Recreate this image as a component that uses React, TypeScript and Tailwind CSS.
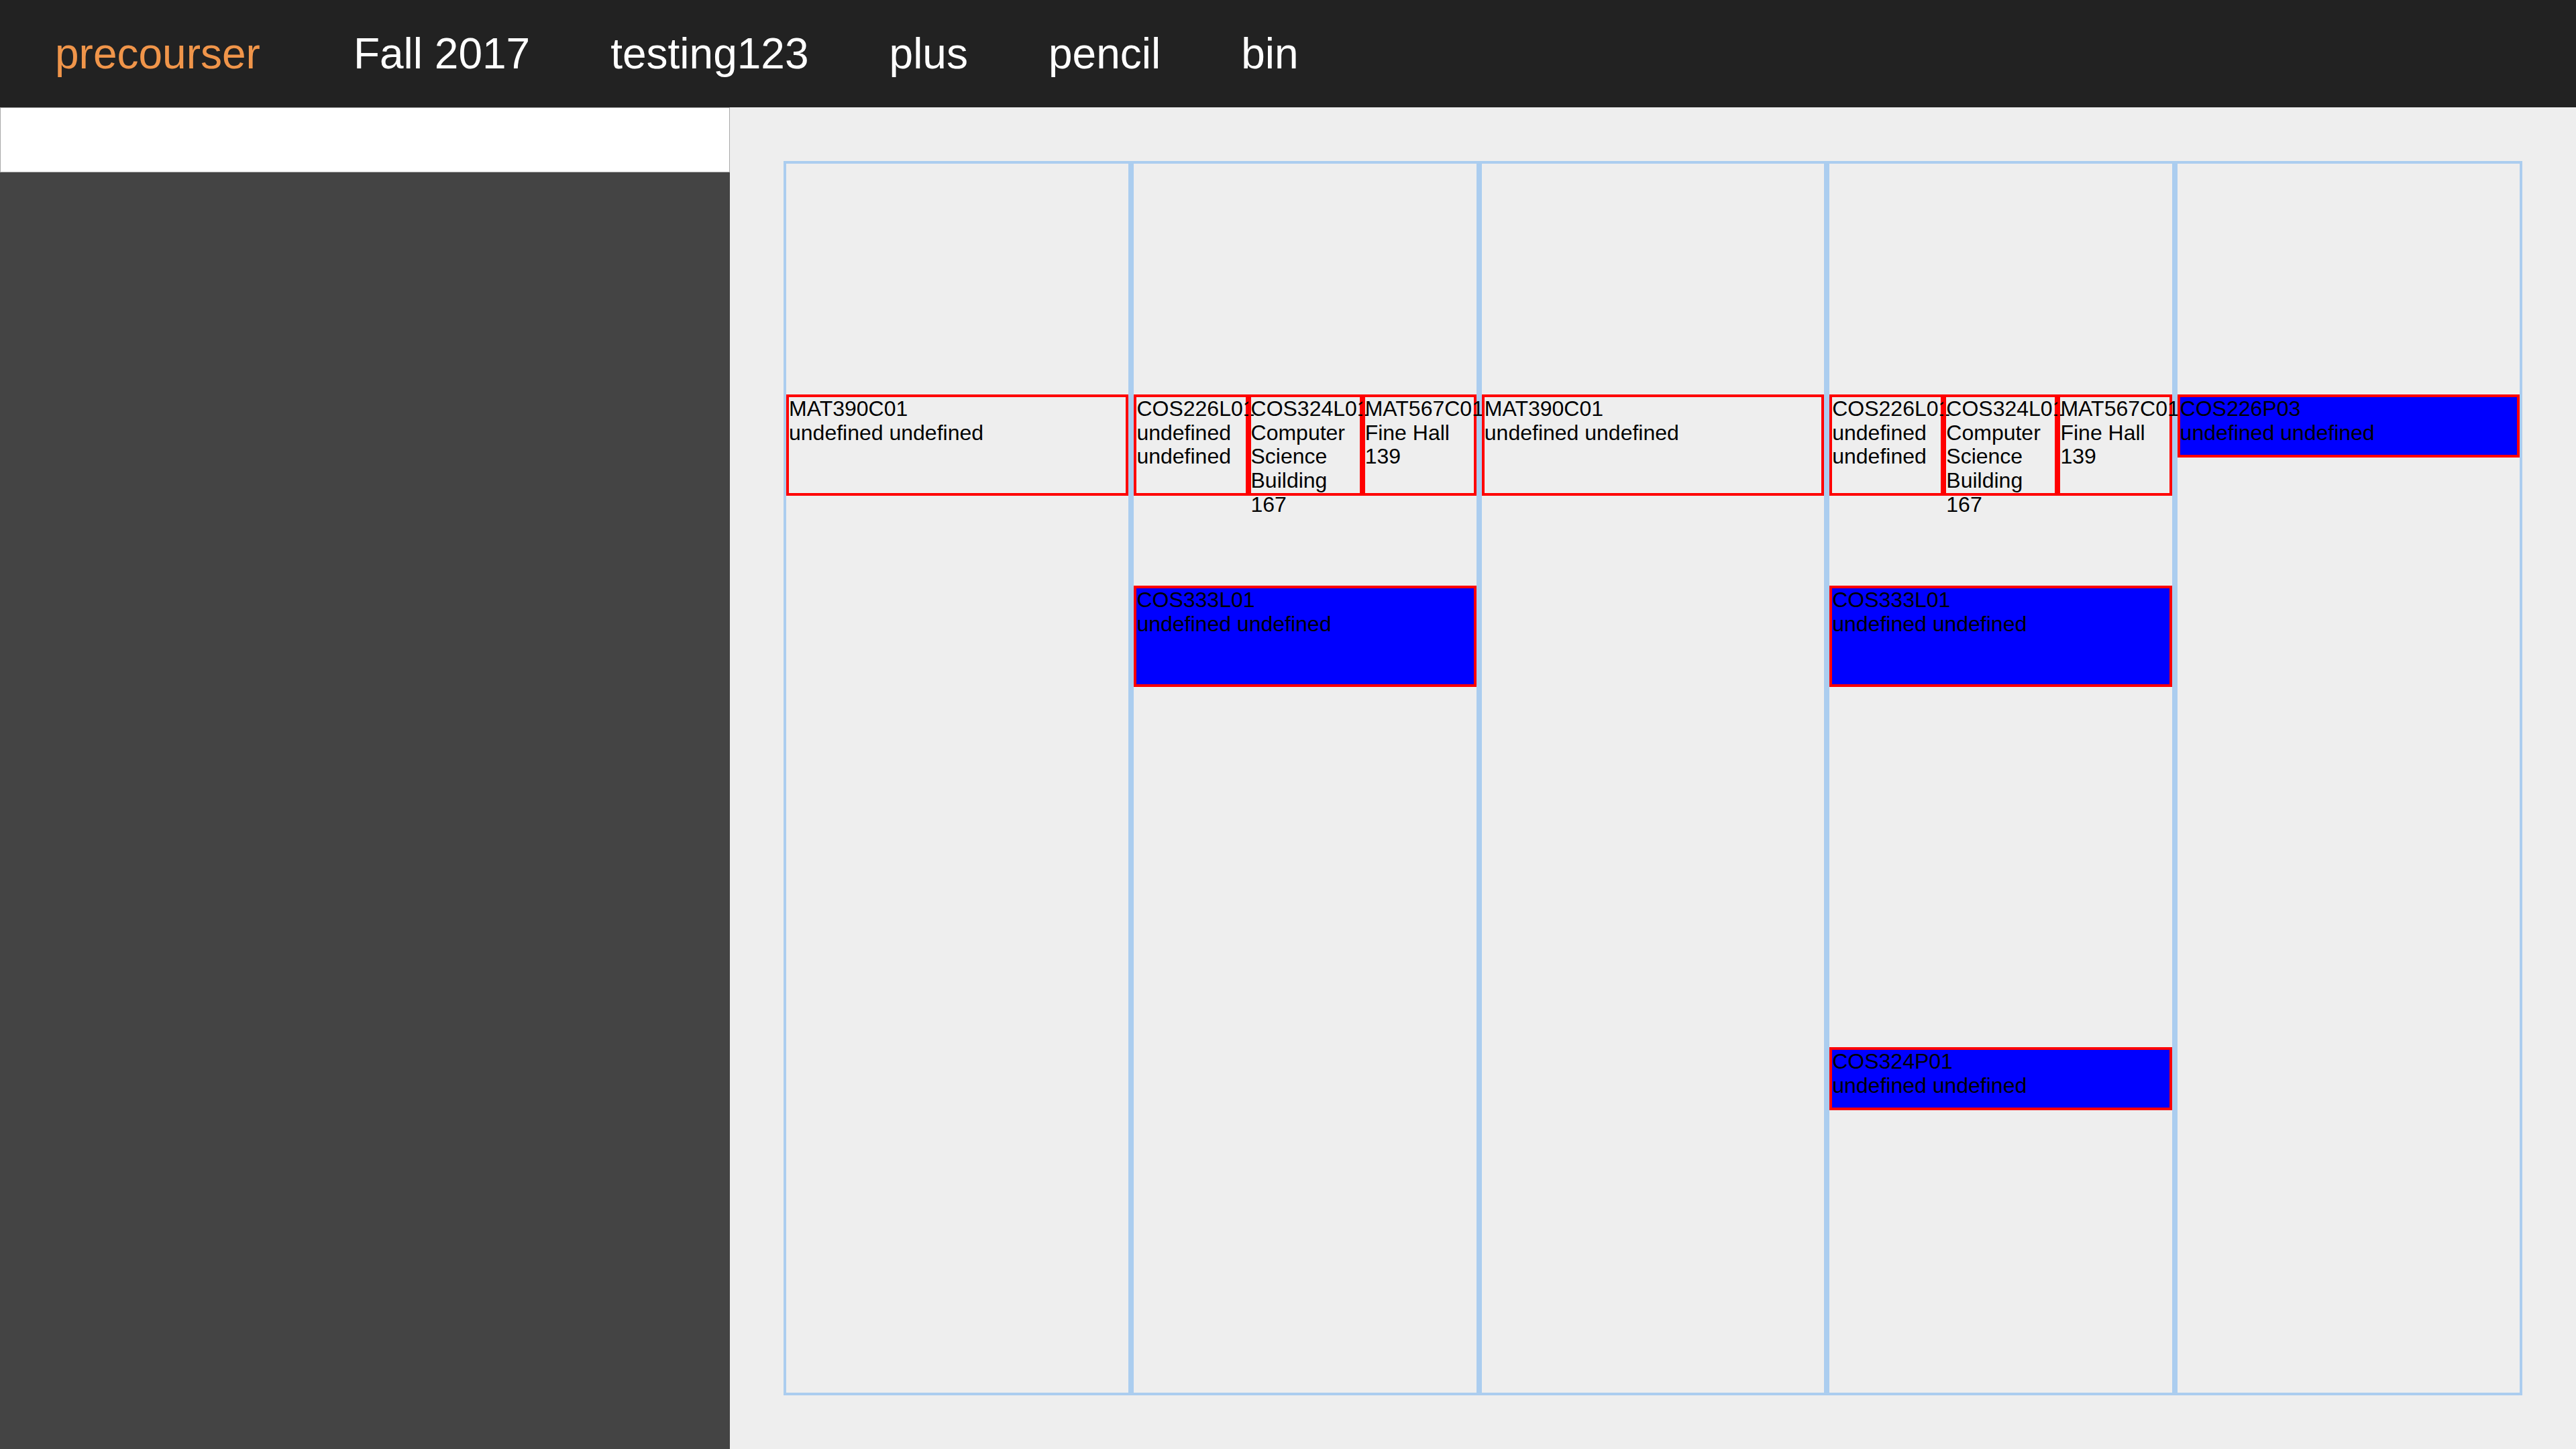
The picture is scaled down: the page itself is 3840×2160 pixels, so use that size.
import React from 'react';

type CalEvent = {
  col: number;
  top: number;
  height: number;
  slot: number;
  slots: number;
  filled?: boolean;
  lines: string[];
};

const events: CalEvent[] = [
  { col: 0, top: 344, height: 151, slot: 0, slots: 1, lines: ['MAT390C01', 'undefined undefined'] },
  { col: 1, top: 344, height: 151, slot: 0, slots: 3, lines: ['COS226L01', 'undefined undefined'] },
  { col: 1, top: 344, height: 151, slot: 1, slots: 3, lines: ['COS324L01', 'Computer Science Building 167'] },
  { col: 1, top: 344, height: 151, slot: 2, slots: 3, lines: ['MAT567C01', 'Fine Hall 139'] },
  { col: 1, top: 629, height: 151, slot: 0, slots: 1, filled: true, lines: ['COS333L01', 'undefined undefined'] },
  { col: 2, top: 344, height: 151, slot: 0, slots: 1, lines: ['MAT390C01', 'undefined undefined'] },
  { col: 3, top: 344, height: 151, slot: 0, slots: 3, lines: ['COS226L01', 'undefined undefined'] },
  { col: 3, top: 344, height: 151, slot: 1, slots: 3, lines: ['COS324L01', 'Computer Science Building 167'] },
  { col: 3, top: 344, height: 151, slot: 2, slots: 3, lines: ['MAT567C01', 'Fine Hall 139'] },
  { col: 3, top: 629, height: 151, slot: 0, slots: 1, filled: true, lines: ['COS333L01', 'undefined undefined'] },
  { col: 3, top: 1317, height: 94, slot: 0, slots: 1, filled: true, lines: ['COS324P01', 'undefined undefined'] },
  { col: 4, top: 344, height: 94, slot: 0, slots: 1, filled: true, lines: ['COS226P03', 'undefined undefined'] },
];

const navLinks = ['Fall 2017', 'testing123', 'plus', 'pencil', 'bin'];

function EventBox({ ev }: { ev: CalEvent }) {
  return (
    <div
      className={`absolute border-4 border-[#ff0000] text-[32px] leading-[35.7px] text-black ${ev.filled ? 'bg-[#0000ff]' : ''}`}
      style={{
        top: ev.top,
        height: ev.height,
        left: `${(ev.slot / ev.slots) * 100}%`,
        width: `${100 / ev.slots}%`,
      }}
    >
      {ev.lines.map((line, i) => (
        <div key={i}>{line}</div>
      ))}
    </div>
  );
}

export default function App() {
  return (
    <div className="flex h-screen w-full flex-col font-['Liberation_Sans',Arial,sans-serif]">
      <nav className="flex h-[160px] shrink-0 items-center bg-[#222222] pl-[82px] text-[64px]">
        <span className="mr-[139px] text-[#f0954a]">precourser</span>
        <div className="flex gap-[120px] text-white">
          {navLinks.map((link) => (
            <span key={link}>{link}</span>
          ))}
        </div>
      </nav>

      <div className="flex min-h-0 flex-1">
        <aside className="flex w-[1088px] shrink-0 flex-col bg-[#444444]">
          <input className="h-[97px] w-full border border-[#a9a9a9] bg-white outline-none" />
        </aside>

        <main className="flex-1 bg-[#eeeeee] p-[80px]">
          <div className="grid h-full grid-cols-5">
            {[0, 1, 2, 3, 4].map((col) => (
              <div key={col} className="border-4 border-[#abcdef]">
                <div className="relative h-full">
                  {events
                    .filter((ev) => ev.col === col)
                    .map((ev, i) => (
                      <EventBox key={i} ev={ev} />
                    ))}
                </div>
              </div>
            ))}
          </div>
        </main>
      </div>
    </div>
  );
}
